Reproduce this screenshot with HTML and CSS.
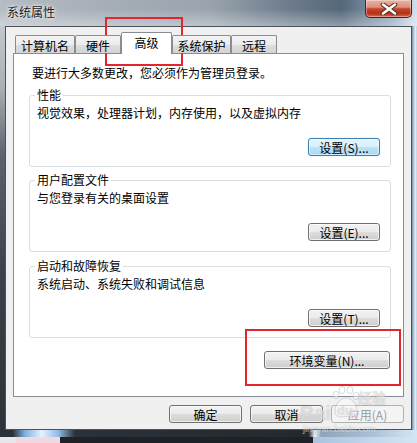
FILE: index.html
```html
<!DOCTYPE html>
<html lang="zh-CN">
<head>
<meta charset="utf-8">
<title>系统属性</title>
<link rel="stylesheet" href="styles.css">
</head>
<body>
<div class="window">
  <div class="titlebar">
    <span class="title">系统属性</span>
    <div class="close">
      <svg width="20" height="12" viewBox="0 0 20 12">
        <path d="M4 1.5 L16 10.5 M16 1.5 L4 10.5" stroke="#5a2a1e" stroke-width="4.6" stroke-linecap="round"/>
        <path d="M4 1.5 L16 10.5 M16 1.5 L4 10.5" stroke="#ffffff" stroke-width="2.6" stroke-linecap="round"/>
      </svg>
    </div>
  </div>
  <div class="frame-mid">
    <div class="frame-left"></div>
    <div class="client">
      <div class="tabs">
        <div class="tab w1">计算机名</div>
        <div class="tab w2">硬件</div>
        <div class="tab w3 active">高级</div>
        <div class="tab w4">系统保护</div>
        <div class="tab w5">远程</div>
      </div>
      <div class="panel">
        <p class="intro">要进行大多数更改，您必须作为管理员登录。</p>
        <div class="group g1">
          <div class="legend">性能</div>
          <div class="desc">视觉效果，处理器计划，内存使用，以及虚拟内存</div>
          <div class="btn-row"><button class="btn focus">设置(S)...</button></div>
        </div>
        <div class="group g2">
          <div class="legend">用户配置文件</div>
          <div class="desc">与您登录有关的桌面设置</div>
          <div class="btn-row"><button class="btn">设置(E)...</button></div>
        </div>
        <div class="group g3">
          <div class="legend">启动和故障恢复</div>
          <div class="desc">系统启动、系统失败和调试信息</div>
          <div class="btn-row"><button class="btn">设置(T)...</button></div>
        </div>
        <div class="env-row"><button class="btn env">环境变量(N)...</button></div>
      </div>
      <div class="dlg-buttons">
        <button class="btn">确定</button>
        <button class="btn">取消</button>
        <button class="btn disabled">应用(A)</button>
      </div>
    </div>
    <div class="frame-right"></div>
  </div>
  <div class="frame-bottom"></div>
</div>
<div class="desktop">
  <span class="d1"></span><span class="d2"></span><span class="d3"></span><span class="d4"></span>
</div>

<div class="mark mark1"></div>
<div class="mark mark2"></div>

<div class="watermark">
  <svg class="paw" width="30" height="34" viewBox="0 0 30 34">
    <g fill="rgba(255,255,255,0.4)" stroke="rgba(150,150,150,0.35)" stroke-width="1">
      <ellipse cx="5" cy="9" rx="3" ry="3.6"/>
      <ellipse cx="11" cy="4" rx="3" ry="3.6"/>
      <ellipse cx="19" cy="4" rx="3" ry="3.6"/>
      <ellipse cx="25" cy="10" rx="3" ry="3.6"/>
      <path d="M15 12 C8 12 4 20 4 25 C4 31 9 32 15 30 C21 32 26 31 26 25 C26 20 22 12 15 12 Z"/>
    </g>
  </svg>
  <span class="wm-bai">Bai</span>
  <span class="wm-du">du</span>
  <span class="wm-jy">经验</span>
  <span class="wm-url">jingyan.baidu.com</span>
</div>
</body>
</html>
```
FILE: styles.css
```css
* { box-sizing: border-box; }
html, body { margin: 0; padding: 0; }
body {
  width: 417px;
  height: 443px;
  overflow: hidden;
  position: relative;
  font-family: "Noto Sans CJK SC", "Noto Sans", sans-serif;
  font-size: 12px;
  color: #000;
  background: #c8dcf0;
}

.window { height: 437px; display: flex; flex-direction: column; }

.titlebar {
  height: 26px;
  display: flex;
  align-items: flex-start;
  background:
    linear-gradient(180deg, rgba(255,255,255,0) 35%, rgba(255,255,255,0.35) 100%),
    linear-gradient(90deg, #b5bcc3 0%, #a6aeb7 25%, #9aa4ae 50%, #6c7b8b 70%, #55677a 82%, #93a8bd 94%, #d3e0ec 100%);
}
.title {
  padding-left: 7px;
  line-height: 24px;
  color: #1a1a1a;
  text-shadow: 0 0 5px #fff, 0 0 3px rgba(255,255,255,0.9);
}
.close {
  margin-left: auto;
  margin-right: 5px;
  width: 47px;
  height: 18px;
  border: 1px solid #4c2218;
  border-top: none;
  border-radius: 0 0 5px 5px;
  background: linear-gradient(#e9b2a3 0%, #dc907d 42%, #c6452d 52%, #b4301a 78%, #d86a45 100%);
  box-shadow: inset 0 0 0 1px rgba(255,255,255,0.35);
  display: flex;
  align-items: center;
  justify-content: center;
}

.frame-mid { flex: 1; display: flex; }
.frame-left {
  width: 5px;
  background: linear-gradient(180deg, #c3c8cd 0%, #a9b0b7 15%, #5b646d 32%, #3a424b 60%, #2c333a 100%);
}
.frame-right {
  width: 5px;
  background: linear-gradient(90deg, #7890a8 0%, #b9cde0 40%, #e8f0f7 75%, #b2c9df 100%);
}
.client {
  flex: 1;
  border: 1px solid #4a525a;
  background: #f0f0f0;
  padding: 5px 7px 0;
  display: flex;
  flex-direction: column;
}
.frame-bottom {
  height: 7px;
  background: linear-gradient(90deg, #2b3138 0%, #2b3138 3%, #7fb0de 6%, #e6f3ff 10%, #8ebce6 14%, #2b3138 18%, #23292f 74%, #eef3f8 75.5%, #8fa4b8 77%, #aec3d8 90%, #d6e6f5 100%);
}

/* tabs */
.tabs {
  display: flex;
  align-items: flex-end;
  height: 21px;
  padding-left: 2px;
  position: relative;
  z-index: 1;
}
.tab {
  height: 18px;
  border: 1px solid #898c95;
  border-bottom: none;
  border-radius: 2px 2px 0 0;
  background: linear-gradient(#f4f4f4, #ececec 50%, #dfdfdf 50%, #d4d4d4);
  text-align: center;
  line-height: 15px;
  padding-top: 2px;
}
.tab.active {
  height: 22px;
  margin-bottom: -1px;
  background: #fff;
  line-height: 20px;
  padding-top: 0;
}
.w1 { width: 60px; }
.w2 { width: 46px; }
.w3 { width: 51px; }
.w4 { width: 59px; }
.w5 { width: 46px; }

/* panel */
.panel {
  height: 344px;
  border: 1px solid #898c95;
  background: #fff;
  padding: 12px 12px 0 15px;
}
.intro { margin: 0 0 0 3px; line-height: 14px; }
.group {
  border: 1px solid #d5dfe5;
  border-radius: 3px;
  padding: 0 10px 10px 7px;
  margin-top: 14px;
}
.group.g1 { margin-top: 15px; }
.group.g2 { margin-top: 13px; }
.legend {
  margin: -8px 0 0 -2px;
  padding: 0 2px;
  background: #fff;
  width: fit-content;
  line-height: 14px;
}
.desc { margin-top: 4px; line-height: 14px; }
.btn-row { margin-top: 18px; display: flex; justify-content: flex-end; }
.env-row { margin-top: 13px; display: flex; justify-content: flex-end; padding-right: 1px; }

.btn {
  width: 72px;
  height: 18px;
  padding: 0;
  font-family: inherit;
  font-size: 12px;
  line-height: 15px;
  color: #000;
  border: 1px solid #707070;
  border-radius: 3px;
  background: linear-gradient(#f2f2f2 0%, #ebebeb 50%, #dddddd 50%, #cfcfcf 100%);
  box-shadow: inset 0 0 0 1px rgba(255,255,255,0.65);
}
.btn.focus {
  border-color: #3c7fb1;
  background: linear-gradient(#e5f4fc 0%, #d9effb 50%, #bde4f8 50%, #a7d8f3 100%);
  box-shadow: inset 0 0 0 1px rgba(255,255,255,0.5), 0 0 1px #61c4f0;
}
.btn.env { width: 126px; }
.btn.disabled {
  color: #9a9a9a;
  border-color: #adb2b5;
  background: #f4f4f4;
  box-shadow: none;
}

.dlg-buttons { margin-top: 8px; display: flex; justify-content: flex-end; gap: 8px; }
.dlg-buttons .btn { width: 73px; }

/* desktop strip under the window */
.desktop { height: 6px; display: flex; }
.desktop span { display: block; height: 6px; }
.d1 { width: 16px; background: #e9e6e8; }
.d2 { width: 44px; background: #f1d9e1; }
.d3 { width: 253px; background: #1e2226; }
.d4 { flex: 1; background: linear-gradient(90deg, #a8c4e0, #d4e6f6); }

/* red annotation boxes */
.mark { position: absolute; border: 2px solid #e3262d; }
.mark1 { left: 105px; top: 17px; width: 78px; height: 49px; }
.mark2 { left: 245px; top: 329px; width: 156px; height: 57px; }

/* watermark */
.watermark {
  position: absolute;
  left: 298px;
  top: 384px;
  width: 100px;
  height: 50px;
  pointer-events: none;
}
.watermark .paw { position: absolute; left: 33px; top: 2px; }
.wm-bai, .wm-du, .wm-jy, .wm-url {
  position: absolute;
  color: rgba(255,255,255,0.5);
  text-shadow: 0 0 1px rgba(130,130,130,0.5);
  white-space: nowrap;
}
.wm-bai { left: 2px; top: 19px; font-family: "Liberation Sans", sans-serif; font-weight: bold; font-size: 20px; line-height: 20px; }
.wm-du { left: 39px; top: 20px; font-family: "Liberation Sans", sans-serif; font-weight: bold; font-size: 13px; line-height: 13px; }
.wm-jy { left: 60px; top: 6px; font-weight: bold; font-size: 14px; line-height: 14px; }
.wm-url { left: 5px; top: 41px; font-family: "Liberation Sans", sans-serif; font-size: 9px; line-height: 9px; }
```
